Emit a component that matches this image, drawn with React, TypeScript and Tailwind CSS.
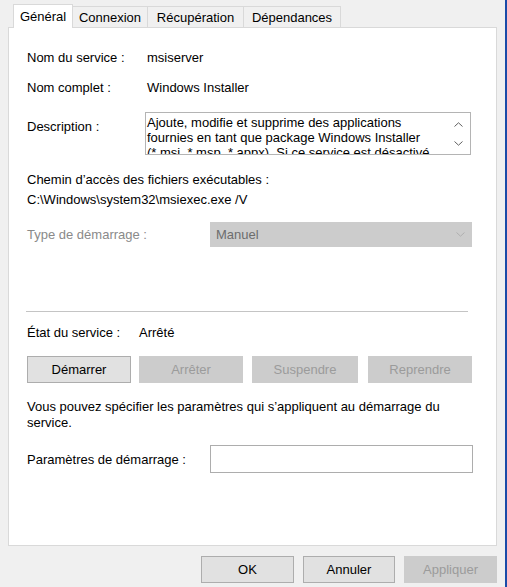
import React from 'react';

const Chevron: React.FC<{ up?: boolean; color?: string }> = ({ up, color = '#606060' }) => (
  <svg width="9" height="5" viewBox="0 0 9 5" fill="none">
    <path
      d={up ? 'M0.5 4.5 L4.5 0.8 L8.5 4.5' : 'M0.5 0.5 L4.5 4.2 L8.5 0.5'}
      stroke={color}
      strokeWidth="1"
    />
  </svg>
);

const Button: React.FC<{ label: string; width: string; disabled?: boolean }> = ({ label, width, disabled }) => (
  <div
    className={
      disabled
        ? `${width} flex h-[27px] items-center justify-center border border-[#cccccc] bg-[#cccccc] text-[#9b9b9b]`
        : `${width} flex h-[27px] items-center justify-center border border-[#adadad] bg-[#e1e1e1] text-black`
    }
  >
    {label}
  </div>
);

export default function App() {
  return (
    <div className="flex h-[587px] w-[507px] bg-[#f0f0f0] font-['Liberation_Sans',Arial,sans-serif] text-[13px] leading-[15px] text-black">
      <div className="flex flex-1 flex-col">
        {/* tabs */}
        <div className="relative z-10 flex h-[27px] items-end pl-[13px]">
          <div className="mb-[-1px] flex h-[24px] w-[60px] items-center justify-center border-x border-t border-[#d9d9d9] bg-white pb-[1px]">
            Général
          </div>
          <div className="flex h-[21px] w-[75px] items-center justify-center border-r border-t border-[#d9d9d9]">
            Connexion
          </div>
          <div className="flex h-[21px] w-[96px] items-center justify-center border-r border-t border-[#d9d9d9]">
            Récupération
          </div>
          <div className="flex h-[21px] w-[97px] items-center justify-center border-r border-t border-[#d9d9d9]">
            Dépendances
          </div>
        </div>

        {/* panel */}
        <div className="mx-[8px] h-[519px] border border-[#d9d9d9] bg-white pl-[18px]">
          <div className="mt-[22px] flex h-[15px]">
            <div className="w-[120px]">Nom du service :</div>
            <div>msiserver</div>
          </div>
          <div className="mt-[15px] flex h-[15px]">
            <div className="w-[120px]">Nom complet :</div>
            <div>Windows Installer</div>
          </div>
          <div className="mt-[17px] flex items-start">
            <div className="w-[118px] pt-[7px]">Description :</div>
            <div className="flex h-[43px] w-[326px] border border-[#b4b4b4]">
              <div className="flex-1 overflow-hidden pl-[1px] pt-[2px] whitespace-nowrap">
                <div>Ajoute, modifie et supprime des applications</div>
                <div>fournies en tant que package Windows Installer</div>
                <div>(*.msi, *.msp, *.appx). Si ce service est désactivé,</div>
              </div>
              <div className="flex w-[20px] flex-col items-center pr-[3px] pt-[9px]">
                <Chevron up />
                <div className="h-[14px]" />
                <Chevron />
              </div>
            </div>
          </div>
          <div className="mt-[17px] h-[15px]">Chemin d’accès des fichiers exécutables :</div>
          <div className="mt-[5px] h-[15px]">C:\Windows\system32\msiexec.exe /V</div>
          <div className="mt-[15px] flex h-[25px] items-center">
            <div className="w-[183px] text-[#8a8a8a]">Type de démarrage :</div>
            <div className="flex h-[25px] w-[262px] items-center justify-between bg-[#cccccc] pl-[6px] pr-[7px] text-[#6d6d6d]">
              <span>Manuel</span>
              <Chevron color="#b0b0b0" />
            </div>
          </div>
          <div className="ml-[-1px] mt-[64px] h-px w-[442px] bg-[#c4c4c4]" />
          <div className="mt-[13px] flex h-[15px]">
            <div className="w-[112px]">État du service :</div>
            <div>Arrêté</div>
          </div>
          <div className="mt-[16px] flex">
            <Button label="Démarrer" width="w-[104px]" />
            <div className="w-[8px]" />
            <Button label="Arrêter" width="w-[104px]" disabled />
            <div className="w-[9px]" />
            <Button label="Suspendre" width="w-[106px]" disabled />
            <div className="w-[10px]" />
            <Button label="Reprendre" width="w-[104px]" disabled />
          </div>
          <div className="mt-[16px] leading-[16px]">
            Vous pouvez spécifier les paramètres qui s’appliquent au démarrage du
            <br />
            service.
          </div>
          <div className="mt-[14px] flex h-[28px] items-center">
            <div className="w-[183px]">Paramètres de démarrage :</div>
            <div className="h-[28px] w-[263px] border border-[#adadad] bg-white" />
          </div>
        </div>

        {/* footer */}
        <div className="mt-[10px] flex justify-end gap-[9px] pr-[8px]">
          <Button label="OK" width="w-[93px]" />
          <Button label="Annuler" width="w-[92px]" />
          <Button label="Appliquer" width="w-[93px]" disabled />
        </div>
      </div>
      <div className="w-[2px] bg-[#1a4ba8]" />
    </div>
  );
}
